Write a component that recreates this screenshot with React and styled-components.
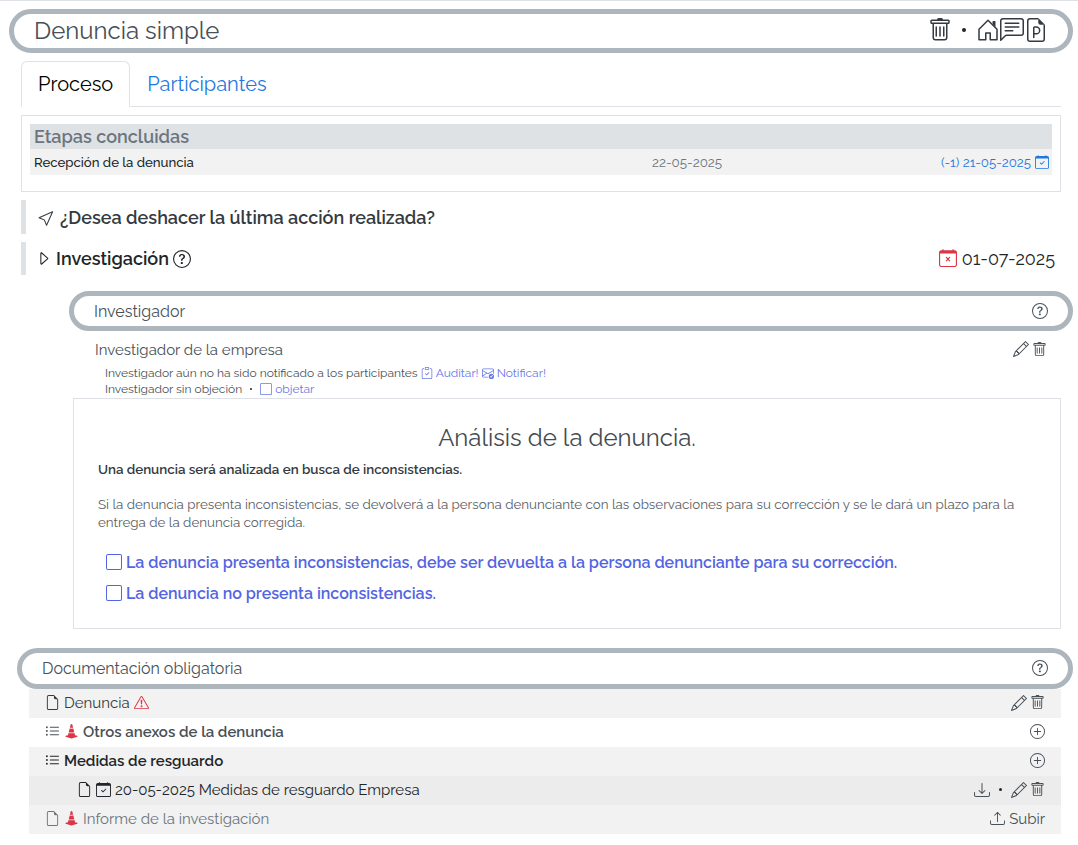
import React from 'react';
import styled, { createGlobalStyle } from 'styled-components';
import {
  BsTrash, BsChatLeftText, BsCursor, BsCaretRight, BsQuestionCircle, BsCalendarCheck, BsCalendarX,
  BsClipboardCheck, BsEnvelopeCheck, BsSquare, BsFileEarmark, BsExclamationTriangle, BsListUl,
  BsConeStriped, BsPencil, BsPlusCircle, BsDownload, BsUpload,
} from 'react-icons/bs';

const GlobalStyle = createGlobalStyle`
  *, *::before, *::after { box-sizing: border-box; }
  body {
    margin: 0;
    background: #fff;
    color: #212529;
    font-family: Raleway, Lato, "Open Sans", sans-serif;
    font-size: 16px;
    line-height: 1.5;
  }
  svg { display: block; flex: none; }
`;

const Page = styled.main`
  display: flex;
  flex-direction: column;
  width: 1078px;
  height: 845px;
  overflow: hidden;
  border-top: 1px solid #dee2e6;
`;

const Pill = styled.header`
  display: flex;
  align-items: center;
  justify-content: space-between;
  flex: none;
  height: ${(p) => p.$height}px;
  margin: ${(p) => p.$top}px 5px 0 ${(p) => p.$left}px;
  padding: 0 20px ${(p) => p.$lift ?? 0}px;
  border: 5px solid #adb5bd;
  border-radius: 50px;
  color: #495057;
  font-size: ${(p) => p.$size ?? 16}px;
  line-height: 1;
`;

const Inline = styled.span`
  display: flex;
  align-items: center;
  gap: ${(p) => p.$gap ?? 4}px;
  color: ${(p) => p.$color ?? 'inherit'};
`;

/* Drops the text slightly so that its x-height centres on the icons beside it. */
const Label = styled.span`
  padding-top: 2px;
`;

const Dot = styled.span`
  width: ${(p) => p.$size}px;
  height: ${(p) => p.$size}px;
  margin: 0 ${(p) => p.$space}px;
  border-radius: 50%;
  background: #212529;
`;

const Tabs = styled.nav`
  display: flex;
  flex: none;
  height: 46px;
  margin: 8px 17px 0 21px;
  border-bottom: 1px solid #dee2e6;
`;

const Tab = styled.a`
  height: 46px;
  padding: 8px 16px;
  border: 1px solid ${(p) => (p.$active ? '#dee2e6' : 'transparent')};
  border-bottom-color: ${(p) => (p.$active ? '#fff' : 'transparent')};
  border-radius: 6px 6px 0 0;
  color: ${(p) => (p.$active ? '#000' : '#1f78e0')};
  font-size: 20px;
  line-height: 28px;
`;

const StagesCard = styled.section`
  flex: none;
  height: 77px;
  margin: 8px 17px 0 21px;
  padding: 8px;
  border: 1px solid #dee2e6;
`;

const StagesTitle = styled.h2`
  height: 25px;
  margin: 0;
  padding-left: 4px;
  background: #dee2e5;
  color: #6c757d;
  font-size: 18px;
  font-weight: 600;
  line-height: 25px;
`;

const StageRow = styled.div`
  display: grid;
  grid-template-columns: 618px 1fr auto;
  align-items: center;
  height: 26px;
  padding: 0 3px 0 4px;
  background: #f2f2f2;
  font-size: 13.3px;
`;

const StageName = styled.span`
  padding-top: 2px;
  font-size: 13.2px;
  font-weight: 500;
`;

const StageDate = styled.span`
  color: #6c757d;
  font-size: 13.4px;
`;

const Quote = styled.section`
  display: flex;
  align-items: center;
  justify-content: space-between;
  flex: none;
  height: ${(p) => p.$height}px;
  margin: 8px 23px 0 21px;
  padding-left: ${(p) => p.$padLeft}px;
  border-left: 5px solid #dee2e5;
  font-size: 18px;
`;

const Strong = styled.strong`
  font-weight: 600;
`;

const DueDate = styled(Inline)`
  gap: 5px;
  svg { margin-bottom: 2px; }
`;

const Investigator = styled.section`
  display: flex;
  justify-content: space-between;
  flex: none;
  height: 67px;
  padding: 9px 31px 0 95px;
  color: #495057;
`;

const InvestigatorName = styled.div`
  height: 25px;
  font-size: 15px;
  line-height: 21px;
`;

const InvestigatorActions = styled.div`
  padding-top: 1px;
`;

const Note = styled.div`
  display: flex;
  align-items: center;
  height: 16px;
  margin-left: 10px;
  font-size: 12px;
  line-height: 16px;
`;

const NoteLink = styled.a`
  display: flex;
  align-items: center;
  gap: 3px;
  margin-left: ${(p) => p.$left}px;
  color: #6878e8;
  svg { margin-bottom: 1px; }
`;

const Analysis = styled.section`
  flex: none;
  height: 231px;
  margin: 0 17px 0 73px;
  padding: 24px;
  border: 1px solid #dee2e6;
  color: #495057;
  font-size: 13.35px;
`;

const AnalysisTitle = styled.h1`
  margin: 0;
  color: #454b50;
  font-size: 24px;
  font-weight: 400;
  line-height: 29px;
  text-align: center;
`;

const Paragraph = styled.p`
  margin: ${(p) => p.$top}px 0 0;
  color: ${(p) => (p.$bold ? '#343a40' : '#5a6167')};
  font-weight: ${(p) => (p.$bold ? 600 : 400)};
  line-height: 18px;
`;

const Choices = styled.div`
  display: flex;
  flex-direction: column;
  gap: 5px;
  padding: 18px 0 0 8px;
`;

const Choice = styled.a`
  display: flex;
  align-items: center;
  gap: 4px;
  color: #5365e2;
  font-size: 16px;
  font-weight: 600;
  line-height: 24px;
`;

const Documents = styled.section`
  flex: none;
  margin: 0 17px 0 29px;
`;

const DocumentRow = styled.div`
  display: flex;
  align-items: center;
  justify-content: space-between;
  height: 29px;
  padding: 0 16px 2px ${(p) => (p.$nested ? 48 : 16)}px;
  background: ${(p) => p.$bg};
  color: ${(p) => p.$color};
  font-size: 15px;
  font-weight: ${(p) => (p.$bold ? 600 : 400)};
  line-height: 25px;
`;

const red = '#dc3545';

const HouseIcon = ({ size }) => (
  <svg width={size} height={size} viewBox="0 0 16 16" fill="currentColor" fillRule="evenodd">
    <path d="M7.646 1.146a.5.5 0 0 1 .708 0l6 6a.5.5 0 0 1 .146.354v7a.5.5 0 0 1-.5.5H9.5a.5.5 0 0 1-.5-.5v-4H7v4a.5.5 0 0 1-.5.5H2a.5.5 0 0 1-.5-.5v-7a.5.5 0 0 1 .146-.354l6-6zM2.5 7.707V14H6v-4a.5.5 0 0 1 .5-.5h3a.5.5 0 0 1 .5.5v4h3.5V7.707L8 2.207l-5.5 5.5z" />
    <path d="M13 2.5V6l-2-2V2.5a.5.5 0 0 1 .5-.5h1a.5.5 0 0 1 .5.5z" />
  </svg>
);

const FilePIcon = ({ size }) => (
  <svg width={size} height={size} viewBox="0 0 16 16" fill="currentColor" fillRule="evenodd">
    <path d="M4 0h5.5v1H4a1 1 0 0 0-1 1v12a1 1 0 0 0 1 1h8a1 1 0 0 0 1-1V4.5h1V14a2 2 0 0 1-2 2H4a2 2 0 0 1-2-2V2a2 2 0 0 1 2-2z" />
    <path d="M9.5 3V0L14 4.5h-3A1.5 1.5 0 0 1 9.5 3z" />
    <path d="M6 6.5a1 1 0 0 1 1-1h1.188a2.75 2.75 0 0 1 0 5.5H7v2a.5.5 0 0 1-1 0V6.5zM7 10h1.188a1.75 1.75 0 1 0 0-3.5H7V10z" />
  </svg>
);

const EditActions = () => (
  <Inline $gap={3} $color="#495057">
    <BsPencil size={16} />
    <BsTrash size={15} />
  </Inline>
);

export default function App() {
  return (
    <>
      <GlobalStyle />
      <Page>
        <Pill $height={44} $top={8} $left={9} $size={24} $lift={2}>
          <Label>Denuncia simple</Label>
          <Inline $gap={0} $color="#343a40">
            <BsTrash size={24} />
            <Dot $size={4} $space={10} />
            <HouseIcon size={24} />
            <BsChatLeftText size={24} />
            <FilePIcon size={24} />
          </Inline>
        </Pill>

        <Tabs>
          <Tab $active>Proceso</Tab>
          <Tab>Participantes</Tab>
        </Tabs>

        <StagesCard>
          <StagesTitle>Etapas concluidas</StagesTitle>
          <StageRow>
            <StageName>Recepción de la denuncia</StageName>
            <StageDate>22-05-2025</StageDate>
            <Inline $gap={4} $color="#1f78e0">
              <Label>(-1) 21-05-2025</Label>
              <BsCalendarCheck size={14} />
            </Inline>
          </StageRow>
        </StagesCard>

        <Quote $height={34} $padLeft={12}>
          <Inline $gap={5} $color="#343a40">
            <BsCursor size={17} />
            <Strong>¿Desea deshacer la última acción realizada?</Strong>
          </Inline>
        </Quote>

        <Quote $height={33} $padLeft={9}>
          <Inline $gap={4}>
            <BsCaretRight size={17} />
            <Strong>Investigación</Strong>
            <BsQuestionCircle size={18} />
          </Inline>
          <DueDate>
            <BsCalendarX size={18} color={red} />
            01-07-2025
          </DueDate>
        </Quote>

        <Pill $height={40} $top={16} $left={69}>
          <Label>Investigador</Label>
          <BsQuestionCircle size={16} />
        </Pill>

        <Investigator>
          <div>
            <InvestigatorName>Investigador de la empresa</InvestigatorName>
            <Note>
              Investigador aún no ha sido notificado a los participantes
              <NoteLink $left={3}><BsClipboardCheck size={12} />Auditar!</NoteLink>
              <NoteLink $left={3}><BsEnvelopeCheck size={12} />Notificar!</NoteLink>
            </Note>
            <Note>
              Investigador sin objeción
              <Dot $size={2} $space={8} />
              <NoteLink $left={0}><BsSquare size={12} />objetar</NoteLink>
            </Note>
          </div>
          <InvestigatorActions><EditActions /></InvestigatorActions>
        </Investigator>

        <Analysis>
          <AnalysisTitle>Análisis de la denuncia.</AnalysisTitle>
          <Paragraph $top={8} $bold>Una denuncia será analizada en busca de inconsistencias.</Paragraph>
          <Paragraph $top={17}>
            Si la denuncia presenta inconsistencias, se devolverá a la persona denunciante con las observaciones para su corrección y se le dará un plazo para la entrega de la denuncia corregida.
          </Paragraph>
          <Choices>
            <Choice><BsSquare size={16} /><Label>La denuncia presenta inconsistencias, debe ser devuelta a la persona denunciante para su corrección.</Label></Choice>
            <Choice><BsSquare size={16} /><Label>La denuncia no presenta inconsistencias.</Label></Choice>
          </Choices>
        </Analysis>

        <Pill $height={41} $top={19} $left={17} $lift={1}>
          <Label>Documentación obligatoria</Label>
          <BsQuestionCircle size={16} />
        </Pill>

        <Documents>
          <DocumentRow $bg="#f2f2f2" $color="#343a40">
            <Inline>
              <BsFileEarmark size={15} />
              <Label>Denuncia</Label>
              <BsExclamationTriangle size={15} color={red} />
            </Inline>
            <EditActions />
          </DocumentRow>
          <DocumentRow $bg="#fff" $color="#495057" $bold>
            <Inline>
              <BsListUl size={15} />
              <BsConeStriped size={15} color={red} />
              <Label>Otros anexos de la denuncia</Label>
            </Inline>
            <BsPlusCircle size={15} />
          </DocumentRow>
          <DocumentRow $bg="#f2f2f2" $color="#212529" $bold>
            <Inline>
              <BsListUl size={15} />
              <Label>Medidas de resguardo</Label>
            </Inline>
            <BsPlusCircle size={15} color="#495057" />
          </DocumentRow>
          <DocumentRow $bg="#ececec" $color="#212529" $nested>
            <Inline>
              <BsFileEarmark size={15} />
              <BsCalendarCheck size={15} />
              <Label>20-05-2025 Medidas de resguardo Empresa</Label>
            </Inline>
            <Inline $gap={0}>
              <BsDownload size={16} color="#495057" />
              <Dot $size={3} $space={9} />
              <EditActions />
            </Inline>
          </DocumentRow>
          <DocumentRow $bg="#f2f2f2" $color="#6c757d">
            <Inline>
              <BsFileEarmark size={15} />
              <BsConeStriped size={15} color={red} />
              <Label>Informe de la investigación</Label>
            </Inline>
            <Inline $color="#495057">
              <BsUpload size={15} />
              <Label>Subir</Label>
            </Inline>
          </DocumentRow>
        </Documents>
      </Page>
    </>
  );
}
